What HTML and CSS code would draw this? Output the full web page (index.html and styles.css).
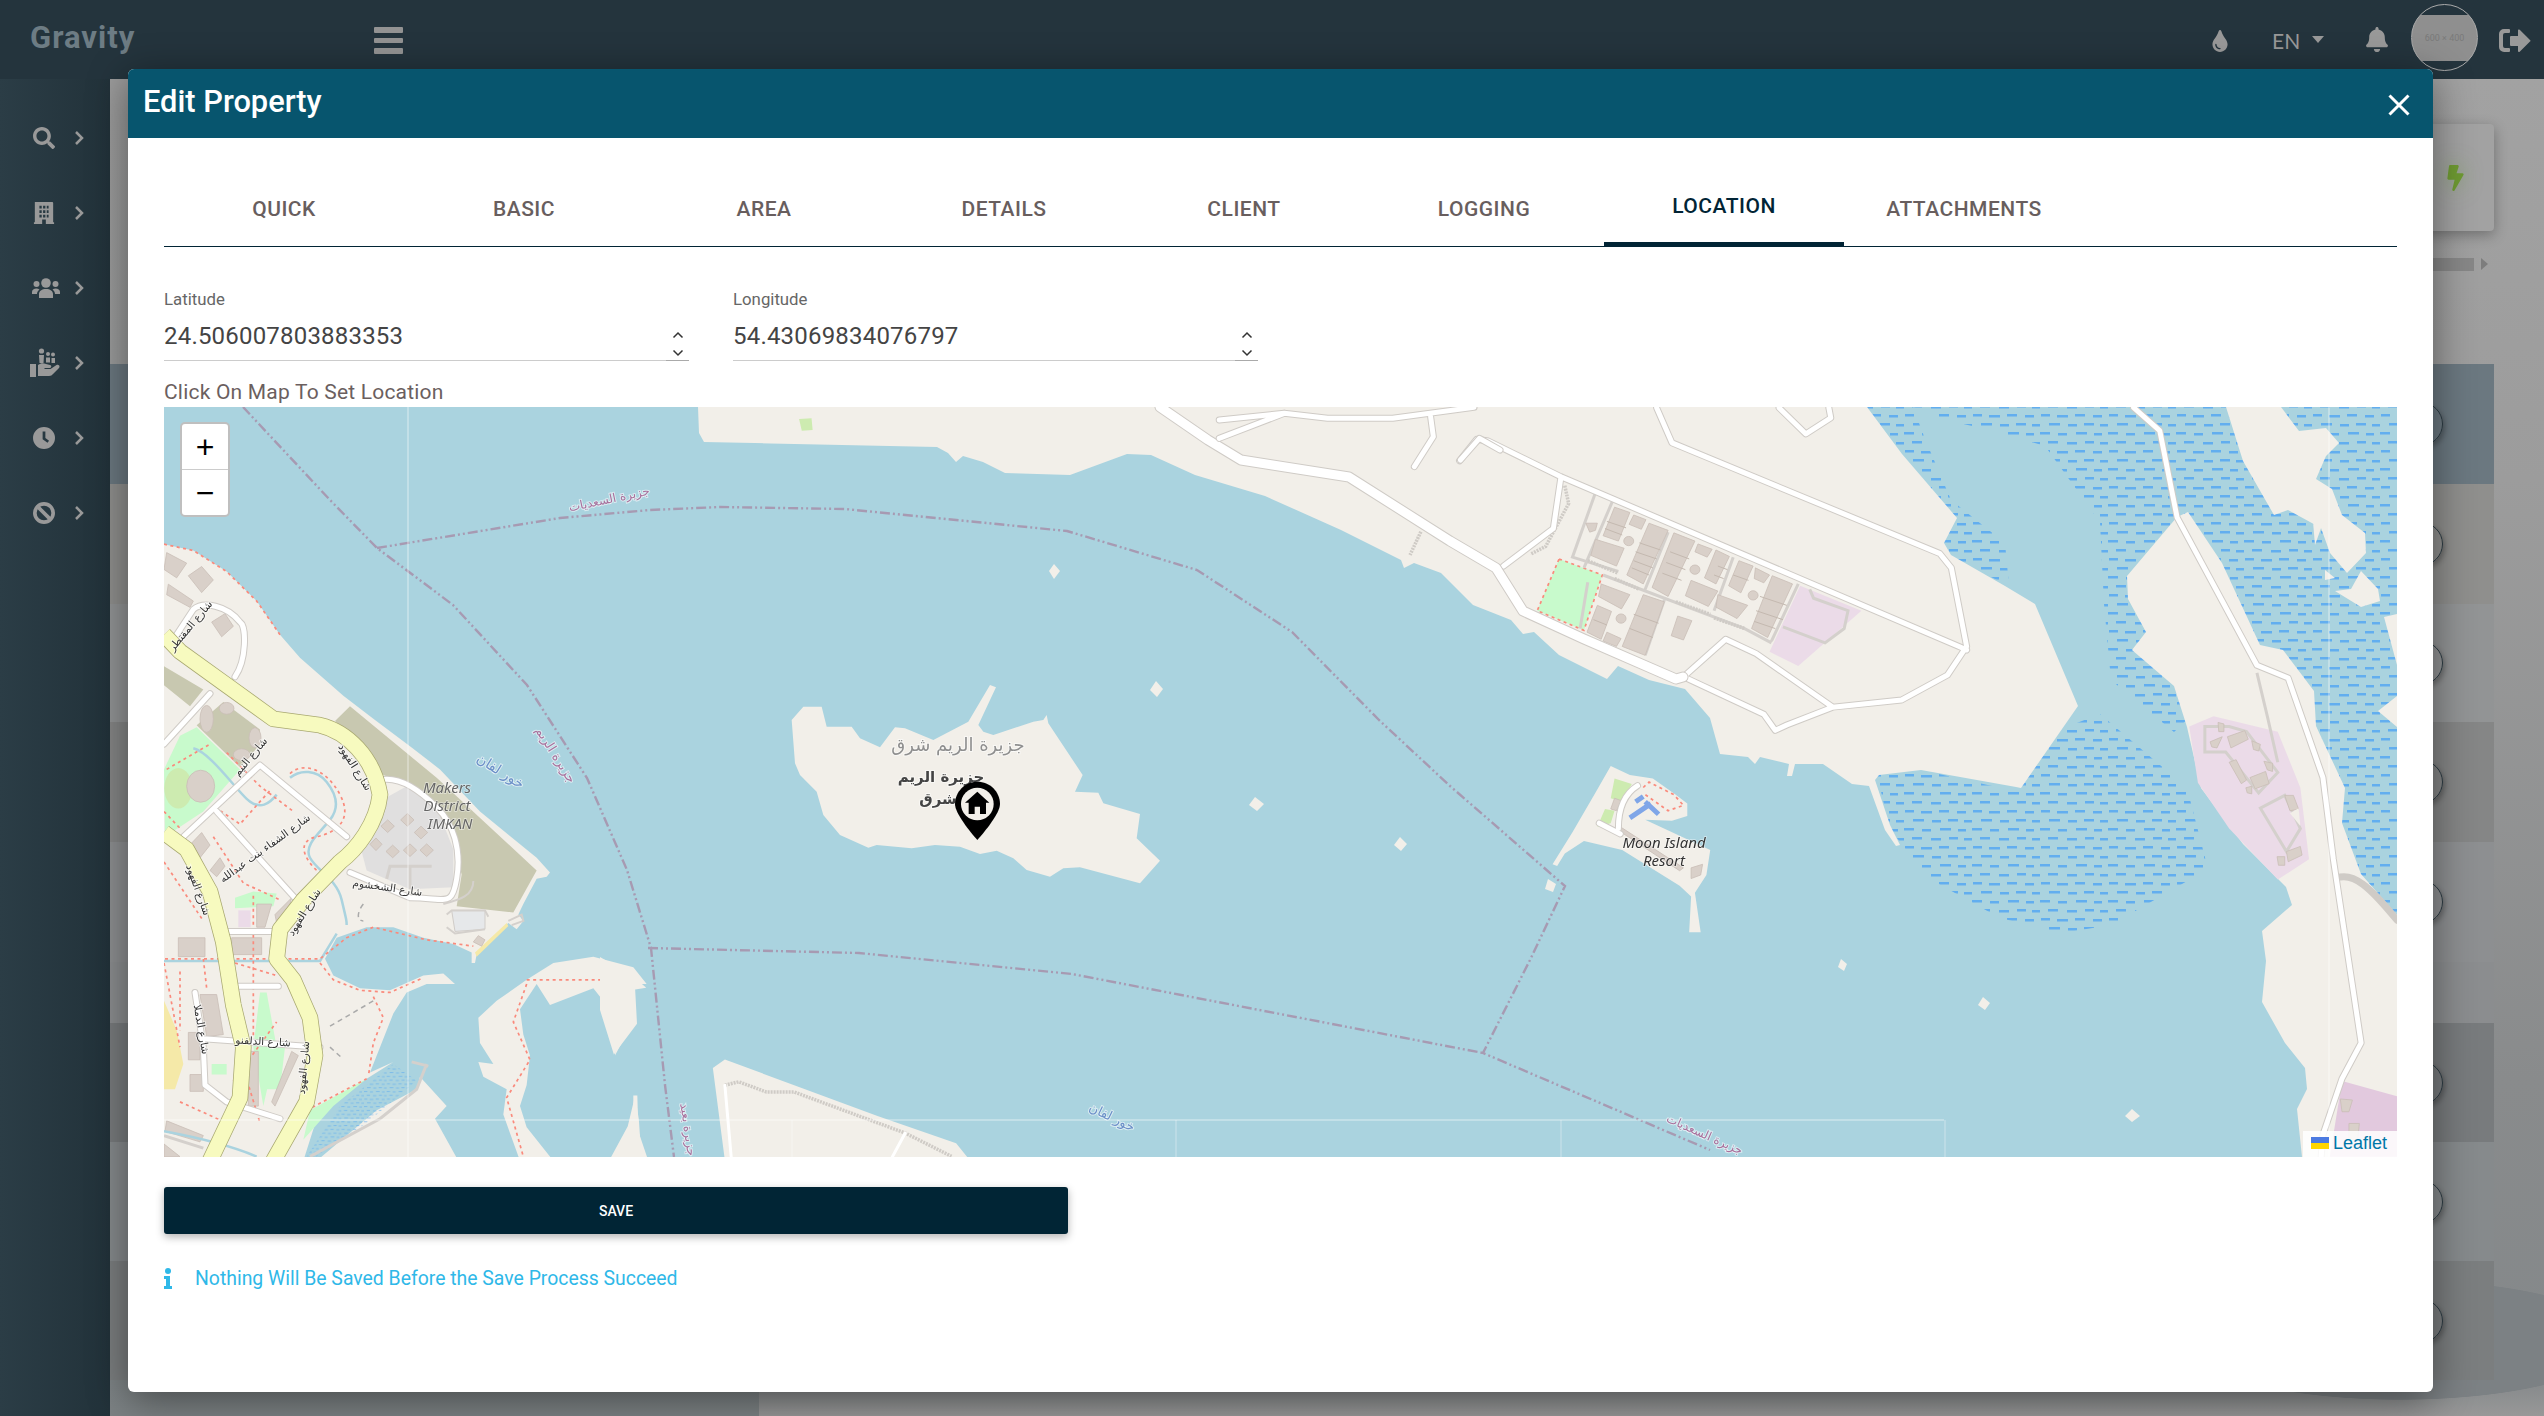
FILE: index.html
```html
<!DOCTYPE html>
<html lang="en">
<head>
<meta charset="utf-8">
<title>Edit Property</title>
<link rel="stylesheet" href="styles.css">
</head>
<body>
<div class="app">
  <header class="topbar">
    <div class="brand">Gravity</div>
    <div class="burger"><i></i><i></i><i></i></div>
    <div class="top-right">
      <svg class="ico-drop" viewBox="0 0 352 512"><path d="M205.22 22.09c-7.94-28.78-49.44-30.12-58.44 0C100.01 179.85 0 222.72 0 333.91 0 432.35 78.72 512 176 512s176-79.65 176-178.09c0-111.75-99.79-153.34-146.78-311.82zM176 448c-61.75 0-112-50.25-112-112 0-8.84 7.16-16 16-16s16 7.16 16 16c0 44.11 35.89 80 80 80 8.84 0 16 7.16 16 16s-7.16 16-16 16z"/></svg>
      <div class="lang">EN<span class="caret"></span></div>
      <svg class="ico-bell" viewBox="0 0 448 512"><path d="M224 512c35.32 0 63.97-28.65 63.97-64H160.03c0 35.35 28.65 64 63.97 64zm215.39-149.71c-19.32-20.76-55.47-51.99-55.47-154.29 0-77.7-54.48-139.9-127.94-155.16V32c0-17.67-14.32-32-31.98-32s-31.98 14.33-31.98 32v20.84C118.56 68.1 64.08 130.3 64.08 208c0 102.3-36.15 133.53-55.47 154.29-6 6.45-8.66 14.16-8.61 21.71.11 16.4 12.98 32 32.1 32h383.8c19.12 0 32-15.6 32.1-32 .05-7.55-2.61-15.27-8.61-21.71z"/></svg>
      <div class="avatar"><span>600 × 400</span></div>
      <svg class="ico-out" viewBox="0 0 32 24"><path d="M10 0H5a5 5 0 0 0-5 5v13a5 5 0 0 0 5 5h5a1 1 0 0 0 1-1v-2a1 1 0 0 0-1-1H6a2 2 0 0 1-2-2V6a2 2 0 0 1 2-2h4a1 1 0 0 0 1-1V1a1 1 0 0 0-1-1z"/><path d="M19 1.500a1 1 0 0 1 1.700-.7L31 11a1 1 0 0 1 0 1.600L20.700 22.800a1 1 0 0 1-1.700-.7V17h-7a1 1 0 0 1-1-1V8a1 1 0 0 1 1-1h7z"/></svg>
    </div>
  </header>

  <nav class="sidebar">
    <div class="side-item"><svg class="side-ico" viewBox="0 0 512 512"><path d="M505 442.7L405.3 343c-4.5-4.5-10.6-7-17-7H372c27.6-35.3 44-79.7 44-128C416 93.1 322.9 0 208 0S0 93.1 0 208s93.1 208 208 208c48.3 0 92.7-16.4 128-44v16.3c0 6.4 2.5 12.5 7 17l99.7 99.7c9.4 9.4 24.6 9.4 33.9 0l28.3-28.3c9.4-9.4 9.4-24.6.1-34zM208 336c-70.7 0-128-57.2-128-128 0-70.7 57.2-128 128-128 70.7 0 128 57.2 128 128 0 70.7-57.2 128-128 128z"/></svg><svg class="chev" viewBox="0 0 10 14"><path d="M2 1l6 6-6 6"/></svg></div>
    <div class="side-item"><svg class="side-ico" viewBox="0 0 22 24"><path fill-rule="evenodd" d="M1 0h19a1 1 0 0 1 1 1v21h1v2H0v-2h1V1zm5 4v3h2.500V4zm4 0v3h2.500V4zm4 0v3h2V4zM6 9v3h2.500V9zm4 0v3h2.500V9zm4 0v3h2V9zM6 14v3h2.500v-3zm4 0v3h2.500v-3zm4 0v3h2v-3zM9 19v5h4v-5z"/></svg><svg class="chev" viewBox="0 0 10 14"><path d="M2 1l6 6-6 6"/></svg></div>
    <div class="side-item"><svg class="side-ico wide" viewBox="0 0 28 20"><circle cx="14" cy="5" r="4.800"/><circle cx="4.500" cy="6" r="3"/><circle cx="23.500" cy="6" r="3"/><path d="M7 20v-4c0-3 3-5 7-5s7 2 7 5v4zM0 16v-2c0-2 2-3.500 4.500-3.500 1 0 2 .3 3 .9C6 12.500 5 14 5 16zM28 16v-2c0-2-2-3.500-4.500-3.500-1 0-2 .3-3 .9 1.500 1.100 2.500 2.600 2.500 4.600z"/></svg><svg class="chev" viewBox="0 0 10 14"><path d="M2 1l6 6-6 6"/></svg></div>
    <div class="side-item"><svg class="side-ico big" viewBox="0 0 30 30"><rect x="0" y="16" width="6" height="13"/><path d="M8 17c3-2 5-2 8-1l4 1c2 .5 1.500 3-.5 3h-5v1h6l6-4c2-1 4 1 2.500 3l-6 6c-1 1-2 2-4 2H8z"/><circle cx="11.500" cy="3" r="2.600"/><circle cx="18" cy="6" r="2"/><circle cx="23" cy="6.500" r="2"/><path d="M9 7h5l-.5 8h-4zM16 9.500h4v5h-4zM21.500 10h3.500v5h-3.500z"/></svg><svg class="chev" viewBox="0 0 10 14"><path d="M2 1l6 6-6 6"/></svg></div>
    <div class="side-item"><svg class="side-ico" viewBox="0 0 24 24"><path fill-rule="evenodd" d="M12 0a12 12 0 1 0 0 24 12 12 0 0 0 0-24zm-1.500 5h3v7l4 3-1.700 2.300-5.300-4z"/></svg><svg class="chev" viewBox="0 0 10 14"><path d="M2 1l6 6-6 6"/></svg></div>
    <div class="side-item"><svg class="side-ico" viewBox="0 0 24 24"><circle class="ban" cx="12" cy="12" r="10"/><path class="ban" d="M5 5l14 14"/></svg><svg class="chev" viewBox="0 0 10 14"><path d="M2 1l6 6-6 6"/></svg></div>
  </nav>

  <main class="backdrop">
    <div class="stat-row">
      <div class="stat-card"><svg class="bolt" viewBox="0 0 320 512"><path d="M296 160H180.600l42.600-129.800C227.200 15 215.700 0 200 0H56C44 0 33.800 8.900 32.200 20.800l-32 240C-1.700 275.200 9.500 288 24 288h118.700L96.600 482.500c-3.600 15.200 8 29.500 23.300 29.500 8.400 0 16.400-4.400 20.800-12l176-304c9.300-15.900-2.200-36-20.700-36z"/></svg></div>
    </div>
    <div class="scroll-row"><div class="scroll-thumb"></div><span class="scroll-arrow"></span></div>
    <div class="rows">
      <div class="row r-head"><span class="ring"></span></div>
      <div class="row r-a"><span class="ring"></span></div>
      <div class="row r-b"><span class="ring"></span></div>
      <div class="row r-c"><span class="ring"></span></div>
      <div class="row r-d"><span class="ring"></span></div>
      <div class="row r-gap"></div>
      <div class="row r-e"><span class="ring"></span></div>
      <div class="row r-f"><span class="ring"></span></div>
      <div class="row r-g"><span class="ring"></span></div>
    </div>
  </main>

  <section class="modal">
    <div class="modal-head">
      <h1 class="modal-title">Edit Property</h1>
      <svg class="close" viewBox="0 0 22 22"><path d="M1.500 1.500l19 19M20.500 1.500l-19 19"/></svg>
    </div>
    <div class="modal-body">
      <div class="tabs">
        <div class="tab">QUICK</div>
        <div class="tab">BASIC</div>
        <div class="tab">AREA</div>
        <div class="tab">DETAILS</div>
        <div class="tab">CLIENT</div>
        <div class="tab">LOGGING</div>
        <div class="tab active">LOCATION</div>
        <div class="tab">ATTACHMENTS</div>
      </div>
      <div class="fields">
        <div class="field">
          <div class="field-label">Latitude</div>
          <div class="field-input"><span>24.506007803883353</span>
            <div class="spin"><svg viewBox="0 0 12 8"><path d="M1.500 6.500L6 2l4.500 4.500"/></svg><svg viewBox="0 0 12 8"><path d="M1.500 1.500L6 6l4.500-4.500"/></svg></div>
          </div>
        </div>
        <div class="field">
          <div class="field-label">Longitude</div>
          <div class="field-input"><span>54.43069834076797</span>
            <div class="spin"><svg viewBox="0 0 12 8"><path d="M1.500 6.500L6 2l4.500 4.500"/></svg><svg viewBox="0 0 12 8"><path d="M1.500 1.500L6 6l4.500-4.500"/></svg></div>
          </div>
        </div>
      </div>
      <div class="map-label">Click On Map To Set Location</div>

      <div class="map">
        <svg class="tiles" viewBox="164 407 2233 750" width="2233" height="750">
          <defs>
            <pattern id="marsh" width="68" height="36" patternUnits="userSpaceOnUse">
              <rect x="0" y="0" width="10" height="2.500" class="dash"/><rect x="18" y="1" width="9" height="2.500" class="dash"/><rect x="36" y="0" width="11" height="2.500" class="dash"/><rect x="54" y="1" width="8" height="2.500" class="dash"/>
              <rect x="8" y="9" width="10" height="2.500" class="dash"/><rect x="27" y="10" width="10" height="2.500" class="dash"/><rect x="45" y="9" width="9" height="2.500" class="dash"/><rect x="60" y="10" width="8" height="2.500" class="dash"/>
              <rect x="1" y="18" width="9" height="2.500" class="dash"/><rect x="17" y="19" width="11" height="2.500" class="dash"/><rect x="35" y="18" width="10" height="2.500" class="dash"/><rect x="53" y="19" width="9" height="2.500" class="dash"/>
              <rect x="9" y="27" width="11" height="2.500" class="dash"/><rect x="28" y="28" width="9" height="2.500" class="dash"/><rect x="44" y="27" width="10" height="2.500" class="dash"/><rect x="60" y="28" width="8" height="2.500" class="dash"/>
            </pattern>
          </defs>
          <rect class="water" x="164" y="407" width="2233" height="750"/>

          <!-- marsh -->
          <path class="marshfill" d="M1867 407H2397V985L2361 880 2260 650 2174 732 2111 680 2104 604 2100 522 2045 446 1990 430 1950 421 1913 407Z"/>
          <path class="marshfill" d="M1867 407H1913L1925 439 1951 500 2005 543 2009 586 1951 557 1944 543 1902 454Z"/>
          <path class="marshfill" d="M1877 775L1890 829 1928 878 2000 918 2062 933 2111 925 2208 869 2187 788 2100 714 2069 726 2010 790 1921 770Z"/>

          <!-- northern land -->
          <path class="land" d="M698 407L699 433 704 442 937 447 948 453 956 462 963 456 983 462 1005 473 1070 475 1127 454 1151 455 1195 475 1265 496 1341 530 1401 560 1404 568 1414 563 1441 573 1473 605 1511 620 1523 634 1534 632 1559 655 1607 679 1618 666 1649 680 1685 689 1710 718 1720 754 1748 757 1755 764 1760 757 1789 764 1787 776 1792 776 1795 764 1823 764 1852 784 1869 786 1885 830 1896 846 1900 845 1890 825 1875 780 1879 775 1921 770 2016 787 2021 788 2078 706 2035 604 2005 586 1951 555 1944 543 1957 518 1902 454 1867 407Z"/>
          <!-- east islands -->
          <path class="land" d="M2177 517L2188 512 2222 563 2260 645 2283 650 2314 691 2316 726 2345 788 2342 823 2361 874 2397 915V1157H2302L2297 1109 2307 1089 2305 1068 2285 1043 2262 1002 2266 961 2262 931 2292 905 2286 887 2243 844 2201 788 2187 727 2174 686 2132 650 2146 632 2128 599 2127 576Z"/>
          <path class="land" d="M2226 407L2243 461 2274 515 2288 510 2321 528 2330 553 2347 573 2366 553 2365 533 2342 515 2332 489 2316 479 2326 456 2339 443 2326 428 2299 431 2281 407Z"/>
          <path class="land" d="M2361 571L2378 589 2380 601 2361 607 2335 591 2351 589ZM2384 617L2397 614V665ZM2378 711L2397 696V727ZM2325 517L2315 545 2312 510ZM2325 570L2335 578 2325 580Z"/>

          <!-- islets -->
          <path class="land" d="M1054 564l6 7-6 8-5-8zM1156 681l7 8-6 8-7-7zM1255 797l9 7-7 7-8-6zM1400 837l7 7-6 7-7-6zM1548 879l8 5-3 8-8-3zM1841 959l6 5-3 7-6-4zM1983 997l7 6-5 7-7-5zM2132 1109l8 7-8 6-7-6z"/>

          <!-- Reem east island -->
          <g transform="translate(780 650) scale(.33333)">
            <path class="land" d="M35 210L70 170 125 170 140 230 215 230 240 265 300 292 345 232 375 235 460 270 565 215 630 105 648 112 595 225 610 245 640 255 760 215 790 210 800 195 805 220 908 375 885 425 955 428 970 460 1080 492 1070 565 1140 632 1080 700 900 652 850 655 810 680 740 660 700 625 650 602 600 612 540 590 465 585 395 595 290 585 265 593 180 555 130 495 110 425 60 375 45 340Z"/>
          </g>

          <!-- west -->
          <g transform="translate(160 500) scale(.33333 .4209)">
            <path class="land" d="M12 105L100 120 200 170 290 240 360 320 420 375 550 465 640 520 750 585 840 640 960 740 1130 850 1170 885 1160 895 1130 900 1090 960 1075 985 1090 1000 1070 1020 1045 1005 950 1080 945 1100 935 1100 935 1075 880 1055 790 1040 700 1015 620 1015 530 1040 495 1090 520 1130 600 1160 690 1165 790 1130 850 1125 885 1150 800 1150 740 1170 700 1220 660 1300 630 1360 700 1335 620 1375 540 1420 470 1470 430 1570H12Z"/>
            <path class="land" d="M780 1370L860 1440 825 1470 895 1570H470L560 1510 650 1450 770 1400Z"/>
            <path class="land" d="M1460 1150L1420 1110 1300 1085 1180 1100 1100 1140 1010 1190 955 1230 960 1290 1000 1340 955 1335 970 1370 1040 1400 1030 1460 1080 1570H1180L1100 1490 1080 1440 1100 1390 1110 1320 1090 1270 1080 1210 1130 1150 1170 1200 1300 1160 1370 1230 1365 1320 1425 1230 1415 1150Z"/>
            <path class="land" d="M1420 1415L1432 1415 1435 1500 1465 1570H1420Z"/>
            <path class="marshfill faint" d="M700 1340L770 1380 620 1480 470 1560 440 1560 540 1440Z"/>

            <path class="scrub" d="M525 525L570 490 830 660 1130 880 1060 980 890 965 905 890 870 780 750 680 660 650 630 600Z"/>
            <path class="scrub" d="M12 395L130 450 90 490 12 440ZM110 535L190 480 300 545 290 590 240 635Z"/>
            <path class="resi" d="M600 820L650 720 740 680 830 730 880 830 880 920 750 925 620 880Z"/>
            <path class="park" d="M60 560L110 540 240 640 130 740 15 800 12 640Z"/>
            <path class="park" d="M225 945L280 930 350 935 340 965 225 970ZM300 1170L320 1170 350 1300 310 1440 280 1300ZM300 1300H375L360 1400H305ZM155 1340H200V1365H155ZM450 1450L620 1375 520 1440 430 1520Z"/>
            <ellipse class="grass" cx="55" cy="685" rx="42" ry="48"/>
            <ellipse class="bldg" cx="122" cy="680" rx="42" ry="38"/>
            <path class="sand" d="M945 1075L1040 1005 1045 1012 950 1085ZM12 1190L50 1260 70 1340 45 1400 12 1400Z"/>
            <path class="pink" d="M235 975H272V1015H235Z"/>

            <g class="bldg">
              <path d="M20 125L80 150 50 185 12 165ZM85 180L125 158 160 190 125 220ZM155 290L195 270 220 300 185 325ZM95 815L125 790 150 820 120 850ZM150 880L180 850 195 870 170 895ZM55 1040H135V1085H55ZM215 1040H305V1080H215ZM120 1175H170L190 1270 140 1275ZM85 1265H120V1330H85ZM265 1310H295V1440H265ZM345 1440L415 1320 395 1310 335 1430ZM90 1365H130V1405H90ZM20 1475L130 1510 120 1525 15 1500ZM12 1530L60 1560H12ZM290 960H335L315 1015H290ZM345 985L395 945 375 1005 350 1005ZM955 1035L975 1045 965 1060 940 1050ZM25 200L100 240 90 255 20 225Z"/>
              <path d="M683 760l20 15-20 15-20-15zM742 745l20 15-20 15-20-15zM783 775l20 15-20 15-20-15zM648 803l18 15-18 15-18-15zM698 820l20 15-20 15-20-15zM750 817l20 15-20 15-20-15zM800 817l20 15-20 15-20-15z"/>
              <ellipse cx="140" cy="520" rx="20" ry="32"/><ellipse cx="285" cy="565" rx="18" ry="24"/><ellipse cx="245" cy="605" rx="25" ry="14"/><ellipse cx="200" cy="495" rx="22" ry="14"/>
            </g>
            <path class="pool" d="M875 975L975 975 975 1020 885 1025Z"/>
            <path class="cway" d="M860 985L875 975 975 975 985 990M860 1015L885 1030 975 1020M850 960C900 950 940 940 940 905M1045 1000L1085 985 1090 1000 1055 1010"/>

            <!-- water channels -->
            <path class="canal" d="M390 660C420 640 470 640 500 670S540 730 510 760 430 820 450 850 530 900 545 950 560 1000 560 1010M12 1095H480L530 1030M100 590C150 600 220 680 260 710S330 720 350 700M12 1500C80 1510 200 1530 290 1560"/>

            <!-- footpaths -->
            <path class="foot" d="M12 105L100 120 200 170 290 240 360 320M12 740L60 780M15 1090H480L560 1040 640 1015 800 1045 940 1060M480 1100L520 1140 600 1165 690 1170 790 1135M640 1180L670 1230 640 1290 625 1370M390 650C430 620 500 640 540 700S530 790 470 800 430 850 470 880 590 860 620 800M165 730L240 770 330 690M160 800L250 910 360 950M280 940V1280M225 1100 350 1130M440 1450L620 1375M12 1100L60 1300M220 1380L350 1240M1100 1150L1060 1240 1110 1330 1040 1420 1090 1560M1100 1140H1400M20 640L150 580M12 860L130 1000M60 1120L60 1260M130 1090L140 1160M210 1090L230 1300M390 1140L470 1250 460 1400M60 1430L200 1480M250 1350L300 1480M200 600L300 680 400 740"/>
            <path class="path-g" d="M510 1250L640 1190M510 1300L545 1325M610 960C590 980 590 1000 610 1000"/>
            <!-- white roads -->
            <path class="road-c" d="M660 665C720 655 780 690 830 730S905 830 890 900 860 945 750 945L570 885M225 420C260 380 260 300 240 290 200 250 130 240 100 260L50 320M150 460L12 580M300 630L70 800M300 630L560 800M170 740L410 950M200 1025H355M230 1155H355M130 1280L480 1300M105 1170 130 1300 135 1390 200 1430 360 1470"/>
            <path class="road-w" d="M660 665C720 655 780 690 830 730S905 830 890 900 860 945 750 945L570 885M225 420C260 380 260 300 240 290 200 250 130 240 100 260L50 320M150 460L12 580M300 630L70 800M300 630L560 800M170 740L410 950M200 1025H355M230 1155H355M130 1280L480 1300M105 1170 130 1300 135 1390 200 1430 360 1470"/>
            <path class="cway2" d="M680 900L690 870H815M750 870V925M12 1510L130 1540M450 1560L660 1470 770 1400 800 1340M755 1335L805 1345"/>
            <!-- primary -->
            <path class="prim-c" d="M12 320L60 360 200 440 340 520 480 535C560 550 640 610 660 700 650 770 590 830 540 860L430 950 360 1020 350 1090 400 1140 450 1230 465 1320 440 1430 340 1570M12 790L80 830 150 930 190 1050 220 1200 250 1300 240 1420 150 1570"/>
            <path class="prim" d="M12 320L60 360 200 440 340 520 480 535C560 550 640 610 660 700 650 770 590 830 540 860L430 950 360 1020 350 1090 400 1140 450 1230 465 1320 440 1430 340 1570M12 790L80 830 150 930 190 1050 220 1200 250 1300 240 1420 150 1570"/>
          </g>

          <!-- southern peninsula -->
          <g transform="translate(600 880) scale(.925 .342)">
            <path class="land" d="M135 525L122 550 135 820H400L385 770 300 690Z"/>
            <path class="land" d="M38 630L42 700 45 820H10L30 720ZM0 225L35 280 50 315 38 320 40 420 15 510 0 380Z"/>
            <path class="hatch" d="M135 600L150 590 180 620 210 620 330 740 380 808"/>
            <path class="road-w thin" d="M135 600L142 815M330 740L315 815"/>
          </g>

          <!-- eastern buildings -->
          <g transform="translate(1450 400) scale(.38270 .35714)">
            <path class="park" d="M285 445L398 490 350 645 228 590Z"/>
            <path class="foot" d="M285 445L398 490 350 645 228 590Z"/>
            <path class="pink" d="M915 520L1075 590 910 745 835 705Z"/>
            <path class="cway2" d="M940 530L950 555 1040 590 1030 640 980 680 870 635M380 260L320 440 440 480M430 270L350 470M570 370L510 530M740 440L690 590M910 515L840 675M400 490L770 640 840 680M560 560L510 715M360 510L340 640"/>
            <path class="hatch" d="M300 240L310 290 250 410 210 432M360 450L440 485M430 500L495 530M590 565L680 600M690 610L770 640"/>
            <g class="bldg">
              <path d="M430 300L470 315 440 395 400 380ZM480 322L512 335 500 362 468 348ZM520 345L570 365 505 515 462 490ZM380 390L455 415 435 465 368 435ZM585 372L640 395 570 550 528 525ZM648 403L685 418 672 440 640 425ZM695 420L730 438 695 515 665 498ZM630 505L700 535 675 578 615 548ZM755 450L792 465 760 540 728 520ZM798 470L835 490 820 512 795 500ZM842 492L895 515 830 665 788 640ZM700 545L778 575 750 612 695 580ZM395 515L470 545 448 585 388 550ZM385 575L422 592 395 670 358 650ZM505 545L560 565 510 715 450 690ZM410 650L447 668 435 690 400 675ZM595 605L632 618 610 672 578 660ZM355 345L385 345 380 365 365 370Z"/>
              <circle cx="467" cy="395" r="13"/><circle cx="640" cy="475" r="13"/><circle cx="792" cy="547" r="13"/><circle cx="447" cy="612" r="13"/>
            </g>
            <path class="bldg-lines" d="M410 340L460 358M405 360L450 378M495 400L550 420M485 425L540 445M480 450L530 470M475 470L520 490M575 425L625 445M565 455L615 475M555 485L605 505M700 465L725 475M690 490L715 500M740 490L780 505M810 550L880 575M800 590L870 615M795 620L850 640M480 600L545 625M470 640L530 665M375 615L410 630"/>
            <path class="road-c" d="M25 170L70 110 100 115 290 215 1330 690 1350 700M290 215L270 360 140 465M540 22L580 120 1280 430 1310 470 1350 690 1300 770 1180 840 1000 860 880 910 850 925 820 880 620 780M610 775L720 670 800 710 1000 860M860 22L930 95 995 50 990 22"/>
            <path class="road-w" d="M25 170L70 110 100 115 290 215 1330 690 1350 700M290 215L270 360 140 465M540 22L580 120 1280 430 1310 470 1350 690 1300 770 1180 840 1000 860 880 910 850 925 820 880 620 780M610 775L720 670 800 710 1000 860M860 22L930 95 995 50 990 22"/>
            <!-- Moon Island -->
            <path class="land" d="M420 1025L470 1050 530 1060 590 1105 620 1130 620 1165 580 1178 510 1175 680 1260 670 1330 640 1380 655 1490 625 1490 630 1390 600 1360 450 1260 350 1235 300 1270 280 1305 268 1300 320 1210 380 1100Z"/>
            <path class="grass" d="M430 1060L475 1075 450 1125 420 1115ZM405 1145L430 1150 420 1185 385 1195Z"/>
            <path class="bldg" d="M430 1115L448 1122 435 1150 420 1145ZM630 1310L660 1300 655 1330 630 1340ZM445 1195L610 1310 600 1318 440 1205Z"/>
            <path class="tile-blue" d="M485 1125L505 1110M510 1125L545 1160M470 1170L525 1130"/>
            <path class="foot" d="M505 1085L520 1070 585 1105 610 1135 570 1150 510 1105"/>
            <path class="road-c" d="M490 1080C460 1100 440 1140 440 1200M390 1185L445 1215"/>
            <path class="road-w" d="M490 1080C460 1100 440 1140 440 1200M390 1185L445 1215"/>
          </g>

          <!-- eastern island detail -->
          <g transform="translate(2000 400) scale(.34722 .51020)">
            <path class="pink" d="M545 640L615 620 800 650 865 760 890 900 800 940 660 840 570 750Z"/>
            <path class="pink2" d="M985 1335L1144 1365V1483H950Z"/>
            <path class="cway2" d="M590 640L660 640 710 650 800 730 745 770 650 690 590 690ZM750 800L820 775 865 840 825 885 750 800ZM740 535L770 620 800 710"/>
            <path class="bldg" d="M628 632L645 635 645 650 630 650ZM605 670L640 660 625 682 610 680ZM655 660L705 648 715 665 665 682ZM725 668L750 675 745 688 730 685ZM660 710L680 705 710 745 695 752ZM720 740L765 728 775 752 735 762ZM708 760L725 757 725 772 712 770ZM760 708L785 712 785 728 770 725ZM820 775L845 775 860 802 835 805ZM798 895L820 895 820 912 802 912ZM825 885L865 875 870 892 830 905ZM980 1370L1015 1372 1005 1395 985 1395ZM1005 1418L1035 1418 1030 1450 1005 1450Z"/>
            <path class="land" d="M835 810L860 800 865 835Z"/>
            <path class="road-c" d="M385 15L460 60 510 230 740 520 830 545 930 740 960 900 1040 1260 985 1330 930 1440 925 1483M980 935C1020 930 1060 950 1144 1020"/>
            <path class="road-w" d="M385 15L460 60 510 230 740 520 830 545 930 740 960 900 1040 1260 985 1330 930 1440 925 1483"/>
          </g>

          <!-- main road east -->
          <path class="road-c fat" d="M1160 407L1208 440 1241 460 1349 477 1450 541 1496 568 1523 611 1584 639 1676 679 1683 677"/>
          <path class="road-w fat" d="M1160 407L1208 440 1241 460 1349 477 1450 541 1496 568 1523 611 1584 639 1676 679 1683 677"/>
          <g transform="translate(650 400) scale(.5421 .33333)">
            <path class="road-c" d="M1050 60L1170 40 1250 55 1370 55 1520 22M1440 50L1445 110 1410 200M1495 180L1530 115 1568 150M1050 115L1170 40"/>
            <path class="road-w" d="M1050 60L1170 40 1250 55 1370 55 1520 22M1440 50L1445 110 1410 200M1495 180L1530 115 1568 150M1050 115L1170 40"/>
            <path class="hatch" d="M1422 395L1402 465"/>
            <path class="grass2" d="M275 57L298 55 300 90 280 92Z"/>
          </g>

          <!-- boundaries -->
          <path class="bound" d="M243 407L330 500 377 548 453 605 527 685 587 778 627 870 651 948 665 1085 674 1157"/>
          <path class="bound" d="M377 548L560 518 650 510 720 507 845 509 1067 531 1197 570 1292 632 1379 720 1450 786 1565 886 1530 960 1483 1053 1710 1150M648 948L859 953 1072 974 1483 1053"/>

          <!-- tile seams -->
          <path class="seam" d="M408 407V1157M2329 407V1157M164 1120H1944"/>
          <path class="seam thin" d="M792 1120V1157M1176 1120V1157M1561 1120V1157M1945 1120V1157"/>

          <!-- labels -->
          <g class="ar">
            <text class="ar-grey" x="958" y="751" font-size="18">جزيرة الريم شرق</text>
            <text class="ar-dark" x="941" y="782" font-size="15">جزيرة الريم</text>
            <text class="ar-dark" x="938" y="804" font-size="15">شرق</text>
            <text class="ar-blue" transform="translate(498 775) rotate(32)" font-size="14">خور لفان</text>
            <text class="ar-blue" transform="translate(1110 1121) rotate(26)" font-size="13">خور لفان</text>
            <text class="ar-pur" transform="translate(552 757) rotate(58)" font-size="13">جزيرة الريم</text>
            <text class="ar-pur" transform="translate(610 503) rotate(-12)" font-size="12">جزيرة السعديات</text>
            <text class="ar-pur" transform="translate(1703 1138) rotate(24)" font-size="12">جزيرة السعديات</text>
            <text class="ar-pur" transform="translate(684 1130) rotate(82)" font-size="12">جزيرة بعيد</text>
            <text class="ar-road" transform="translate(352 769) rotate(58)">شارع الفهود</text>
            <text class="ar-road" transform="translate(195 891) rotate(70)">شارع الفهود</text>
            <text class="ar-road" transform="translate(307 914) rotate(-58)">شارع الفهود</text>
            <text class="ar-road" transform="translate(307 1068) rotate(-85)">شارع الفهود</text>
            <text class="ar-road" transform="translate(263 1045) rotate(3)">شارع الدلفنو</text>
            <text class="ar-road" transform="translate(198 1030) rotate(80)">شارع الدملا</text>
            <text class="ar-road" transform="translate(387 891) rotate(8)">شارع الشخشوم</text>
            <text class="ar-road" transform="translate(253 759) rotate(-50)">شارع النيم</text>
            <text class="ar-road" transform="translate(267 851) rotate(-36)">شارع الشفاء بنت عبدالله</text>
            <text class="ar-road" transform="translate(193 628) rotate(-50)">شارع المقتطر</text>
          </g>
          <g class="en-label">
            <text x="447" y="793">Makers</text><text x="447" y="811">District</text><text x="450" y="829">IMKAN</text>
            <text class="en-dark" x="1664" y="848">Moon Island</text><text class="en-dark" x="1664" y="866">Resort</text>
          </g>
          <!-- marker -->
          <g transform="translate(780 650) scale(.33333)">
            <path class="pin" d="M592 395C555 395 525 425 525 462 525 490 570 545 592 570 614 545 660 490 660 462 660 425 630 395 592 395Z"/>
            <circle class="pin-in" cx="592" cy="462" r="49"/>
            <path class="pin" d="M592 425L628 458H618V492H600V470H584V492H566V458H555Z"/>
          </g>
        </svg>
        <div class="zoom-ctl"><div class="zoom-btn z-top">+</div><div class="zoom-btn">−</div></div>
        <div class="attrib"><svg class="flag" viewBox="0 0 18 12"><rect width="18" height="6" fill="#4C7BE1"/><rect y="6" width="18" height="6" fill="#FFD500"/></svg><span>Leaflet</span></div>
      </div>

      <button class="save">SAVE</button>
      <div class="note">
        <svg class="note-ico" viewBox="0 0 8 21"><circle cx="4" cy="3" r="3"/><path d="M0 8h6v10h2v3H0v-3h2v-7H0z"/></svg>
        <span>Nothing Will Be Saved Before the Save Process Succeed</span>
      </div>
    </div>
  </section>
</div>
</body>
</html>
```

FILE: styles.css
```css
*{box-sizing:border-box}
html,body{margin:0;padding:0;width:2544px;height:1416px;overflow:hidden;background:#999;font-family:Roboto,"Noto Sans",sans-serif}
.app{position:relative;display:grid;grid-template-columns:110px 1fr;grid-template-rows:79px 1fr;width:2544px;height:1416px}

.topbar{grid-column:1/3;display:flex;align-items:center;background:#24343d;padding-left:30px}
.brand{width:344px;font-size:31px;font-weight:700;letter-spacing:1px;color:#6d7c84;margin-top:-4px}
.burger{display:flex;flex-direction:column;gap:5px;width:29px;margin-top:2px}
.burger i{display:block;height:5.500px;background:#939393;border-radius:1px}
.top-right{margin-left:auto;display:flex;align-items:center;height:100%;padding-right:13px}
.top-right svg{fill:#999}
.ico-drop{width:16px;height:22px;margin-right:44px;margin-top:2px}
.lang{display:flex;align-items:center;font-size:21px;color:#999;width:94px;margin-top:2px;font-family:Lato,Roboto,sans-serif}
.caret{border:6px solid transparent;border-top:7px solid #999;border-bottom:0;margin-left:12px;margin-top:-2px}
.ico-bell{width:22px;height:25px;margin-top:-1px}
.avatar{width:67px;height:67px;border-radius:50%;margin:-4px 0 0 23px;border:1.500px solid #aaa;background:linear-gradient(#24343d 0 10px,#8f8f8f 10px 56px,#24343d 56px);display:flex;align-items:center;justify-content:center}
.avatar span{font-size:9px;color:#7a7a7a;white-space:nowrap}
.ico-out{width:32px;height:24px;margin-left:21px;margin-top:2px}

.sidebar{display:flex;flex-direction:column;padding-top:21.500px;background:linear-gradient(90deg,#2b3d46,#22323a)}
.side-item{height:75px;display:flex;align-items:center;padding-left:33px;position:relative}
.side-ico{width:22px;height:22px;fill:#999;flex:none}
.side-ico.wide{width:28px;height:20px;margin-left:-1px}
.side-ico.big{width:30px;height:30px;margin-left:-3px}
.ban{fill:none;stroke:#999;stroke-width:4}
.chev{position:absolute;left:74px;width:10px;height:14px;fill:none;stroke:#999;stroke-width:2.500}

.backdrop{overflow:hidden;display:flex;flex-direction:column;padding-top:45px;
  background:
    radial-gradient(ellipse 220px 60px at 2290px 1261px,#7c8184 99%,transparent 100%),
    linear-gradient(#9c9c9c,#9a9b9b 300px,#7c8284 1337px) 0 0/649px 100% no-repeat,
    linear-gradient(#a2a2a2,#9c9c9c 400px,#898b8c 1000px,#84888a 1300px,#989898 1337px)}
.stat-row{display:flex;justify-content:flex-end;padding-right:50px}
.stat-card{width:200px;height:107px;background:#a2a2a2;border-radius:4px;box-shadow:0 4px 14px rgba(0,0,0,.3);display:flex;align-items:center;justify-content:flex-end;padding-right:30px}
.bolt{width:17px;height:26px;fill:#6e9a32;filter:drop-shadow(0 0 10px rgba(110,170,60,.5))}
.scroll-row{display:flex;align-items:center;height:12px;margin-top:27px;justify-content:flex-end;padding-right:51px}
.scroll-thumb{width:300px;height:13px;background:#878787;margin-right:12px}
.scroll-arrow{border:6px solid transparent;border-left:7px solid #7d7d7d;border-right:0;position:relative;left:-5px}
.rows{margin-top:94px;width:2384px;display:flex;flex-direction:column}
.row{height:120px;display:flex;align-items:center;justify-content:flex-end;padding-right:51px}
.r-head{background:#6b7880}
.r-a{background:#8f8f8d}
.r-b{background:#929495;height:118px}
.r-c{background:#858686}
.r-d{background:#8d8f91}
.r-gap{height:61px;background:#8b8d8f}
.r-e{background:#787b7d;height:119px}
.r-f{background:#868a8c;height:119px}
.r-g{background:#7b7e7f;height:119px}
.ring{width:44px;height:44px;border-radius:50%;border:1.500px solid #2b3a42;box-shadow:2px 3px 5px rgba(0,0,0,.25)}

.modal{position:absolute;left:128px;top:69px;width:2305px;height:1323px;background:#fff;border-radius:6px;box-shadow:0 8px 40px rgba(0,0,0,.45);display:flex;flex-direction:column;overflow:hidden}
.modal-head{height:69px;flex:none;background:#07556e;display:flex;align-items:center;justify-content:space-between;padding:0 23px 0 15px}
.modal-title{margin:0;font-size:30.800px;font-weight:500;color:#fff;line-height:1;margin-top:-3px}
.close{width:22px;height:22px;fill:none;stroke:#fff;stroke-width:3;margin-top:3px}
.modal-body{padding:0 36px;flex:1}

.tabs{display:flex;margin-top:32px;height:77px;border-bottom:1.500px solid #012435}
.tab{width:240px;display:flex;align-items:center;justify-content:center;font-size:21px;font-weight:500;letter-spacing:.5px;color:#685e5e;padding-top:1px}
.tab.active{color:#012435;padding:1px 0 2px;border-bottom:5px solid #012435;height:77px}

.fields{display:flex;gap:44px;margin-top:43px}
.field{width:525px}
.field-label{font-size:16.800px;line-height:18px;color:#666}
.field-input{height:53px;border-bottom:1px solid #ccc;display:flex;align-items:center;justify-content:space-between;font-size:24px;color:#444;letter-spacing:.2px}
.field-input span{padding-top:3px}
.spin{width:23px;height:53px;border-bottom:1px solid #aaa;margin-bottom:-1px;display:flex;flex-direction:column;align-items:center;justify-content:flex-end;gap:10px;padding-bottom:3px}
.spin svg{width:12px;height:8px;fill:none;stroke:#333;stroke-width:1.500}
.map-label{height:46px;padding-top:17px;font-size:21px;line-height:28px;color:#6b5f5f;letter-spacing:.2px}

.map{position:relative;width:2233px;height:750px;overflow:hidden;background:#aad3df}
.tiles{display:block;filter:blur(.7px)}
.tiles *{vector-effect:non-scaling-stroke}
.water{fill:#aad3df}
.land{fill:#f2efe9}
.dash{fill:#62aeef}
.marshfill{fill:url(#marsh)}
.marshfill.faint{opacity:.6}
.scrub{fill:#c8c8b0}
.resi{fill:#e0dfdf}
.park{fill:#c8facc}
.grass{fill:#cdebb0}
.grass2{fill:#cdebb0}
.sand{fill:#f5e9a8}
.pink{fill:#ebdbe8}
.pink2{fill:#e2c9de}
.bldg{fill:#d9d0c9;stroke:#c9beb6;stroke-width:.8}
.bldg-lines{fill:none;stroke:#c4b9b0;stroke-width:1}
.pool{fill:#e6e8ea;stroke:#d0ccc8;stroke-width:1}
.tile-blue{fill:none;stroke:#7fa6e8;stroke-width:5}
.cway{fill:none;stroke:#d4d0cc;stroke-width:2}
.cway2{fill:none;stroke:#d4d0cc;stroke-width:3}
.canal{fill:none;stroke:#aad3df;stroke-width:2.500}
.foot{fill:none;stroke:#fa8a7c;stroke-width:1.700;stroke-dasharray:3 3.500}
.path-g{fill:none;stroke:#aaa;stroke-width:1.500;stroke-dasharray:5 4}
.hatch{fill:none;stroke:#cfcbc6;stroke-width:3.500;stroke-dasharray:2 1}
.road-c{fill:none;stroke:#cfcbc6;stroke-width:7;stroke-linejoin:round;stroke-linecap:round}
.road-w{fill:none;stroke:#fff;stroke-width:5;stroke-linejoin:round;stroke-linecap:round}
.road-w.thin{stroke-width:3}
.road-c.fat{stroke-width:11}
.road-w.fat{stroke-width:9}
.prim-c{fill:none;stroke:#a8a870;stroke-width:16.500;stroke-linejoin:round}
.prim{fill:none;stroke:#f7fabf;stroke-width:15;stroke-linejoin:round}
.bound{fill:none;stroke:#a79ab2;stroke-width:2.400;stroke-dasharray:10 3 2 3 2 3}
.seam{fill:none;stroke:rgba(255,255,255,.4);stroke-width:1.500}
.seam.thin{stroke-width:1}
.ar text{font-family:"DejaVu Sans",sans-serif;text-anchor:middle;paint-order:stroke;stroke:rgba(255,255,255,.55);stroke-width:2px}
.ar-grey{fill:#8f8f8f}
.ar-dark{fill:#444;font-weight:700}
.ar-blue{fill:#6a8fc8}
.ar-pur{fill:#a8709c}
.ar-road{fill:#333;font-size:10.500px}
.en-label text{font-family:"Noto Sans","Open Sans",sans-serif;font-style:italic;font-size:15px;text-anchor:middle;fill:#666;paint-order:stroke;stroke:rgba(255,255,255,.5);stroke-width:1.500px}
.en-label .en-dark{fill:#333}
.pin{fill:#000}
.pin-in{fill:#f2efe9}

.zoom-ctl{position:absolute;left:16px;top:15px;width:50px;height:95px;border:2px solid rgba(0,0,0,.25);border-radius:5px;background-clip:padding-box;background:#fff;overflow:hidden}
.zoom-btn{height:45.500px;padding-top:2px;display:flex;align-items:center;justify-content:center;font-family:"Liberation Sans",sans-serif;font-size:32px;color:#000;line-height:1}
.z-top{border-bottom:1px solid #ccc}
.attrib{position:absolute;right:0;bottom:0;width:94px;height:26px;background:rgba(255,255,255,.85);display:flex;align-items:center;padding:0 0 2px 8px;gap:4px}
.flag{width:18px;height:12px;flex:none}
.attrib span{font-family:"Liberation Sans",Arial,sans-serif;font-size:18px;color:#0078a8}

.save{display:block;width:904px;height:47px;margin-top:30px;border:0;border-radius:3px;background:#012535;color:#fff;font-family:Roboto,sans-serif;font-size:14px;font-weight:500;box-shadow:0 3px 8px rgba(0,0,0,.3)}
.note{display:flex;align-items:center;margin-top:34px;height:21px}
.note-ico{width:8px;height:21px;fill:#2fb8e8;flex:none;margin-right:23px}
.note span{font-size:19.400px;color:#2fb8e8}
```
